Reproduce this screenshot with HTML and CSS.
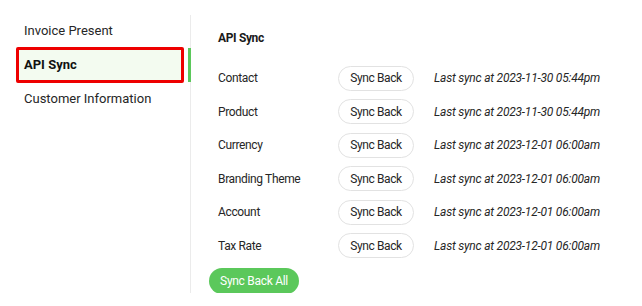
FILE: index.html
```html
<!DOCTYPE html>
<html lang="en">
<head>
    <meta charset="UTF-8">
    <title>Settings - API Sync</title>
    <link rel="stylesheet" href="styles.css">
</head>
<body>
    <div class="settings">
        <nav class="sidebar">
            <div class="nav-item">Invoice Present</div>
            <div class="nav-item active">API Sync</div>
            <div class="nav-item">Customer Information</div>
        </nav>

        <main class="panel">
            <h2 class="panel-title">API Sync</h2>
            <div class="sync-table">
                <span class="sync-label">Contact</span>
                <button class="btn-outline">Sync Back</button>
                <span class="sync-time">Last sync at 2023-11-30 05:44pm</span>

                <span class="sync-label">Product</span>
                <button class="btn-outline">Sync Back</button>
                <span class="sync-time">Last sync at 2023-11-30 05:44pm</span>

                <span class="sync-label">Currency</span>
                <button class="btn-outline">Sync Back</button>
                <span class="sync-time">Last sync at 2023-12-01 06:00am</span>

                <span class="sync-label">Branding Theme</span>
                <button class="btn-outline">Sync Back</button>
                <span class="sync-time">Last sync at 2023-12-01 06:00am</span>

                <span class="sync-label">Account</span>
                <button class="btn-outline">Sync Back</button>
                <span class="sync-time">Last sync at 2023-12-01 06:00am</span>

                <span class="sync-label">Tax Rate</span>
                <button class="btn-outline">Sync Back</button>
                <span class="sync-time">Last sync at 2023-12-01 06:00am</span>
            </div>
            <button class="btn-primary">Sync Back All</button>
        </main>
    </div>
</body>
</html>
```

FILE: styles.css
```css
:root {
    --text-color: #262626;
    --border-color: #ebebeb;
    --green: #5bc85b;
    --font-family: Roboto, 'Noto Sans', sans-serif;
}

* {
    margin: 0;
    padding: 0;
    box-sizing: border-box;
}

body {
    font-family: var(--font-family);
    background: #ffffff;
    color: var(--text-color);
}

.settings {
    display: flex;
    margin-top: 15px;
    height: 278px;
}

.sidebar {
    width: 191px;
    padding: 0 6px 0 16px;
    border-right: 1px solid var(--border-color);
    display: flex;
    flex-direction: column;
}

.nav-item {
    position: relative;
    height: 32px;
    padding: 0 5px;
    border: 3px solid transparent;
    font-size: 13px;
    line-height: 26px;
    color: var(--text-color);
}

.nav-item.active {
    height: 36px;
    line-height: 30px;
    border-color: #ee0000;
    border-radius: 2px;
    background: #f3fbf0;
    font-weight: 700;
    color: #111111;
}

.nav-item.active::after {
    content: "";
    position: absolute;
    top: -2px;
    bottom: -2px;
    right: -10px;
    width: 3px;
    background: var(--green);
}

.panel {
    flex: 1;
    padding: 15px 0 0 18px;
    letter-spacing: -0.35px;
}

.panel-title {
    margin: 0 0 19.5px 9px;
    font-size: 12px;
    line-height: 16px;
    font-weight: 700;
    color: #1a1a1a;
}

.sync-table {
    display: grid;
    grid-template-columns: 100px 76px auto;
    column-gap: 20px;
    row-gap: 8.5px;
    align-items: center;
    margin-left: 9px;
    font-size: 12px;
}

.sync-label {
    color: var(--text-color);
}

.sync-time {
    font-style: italic;
    letter-spacing: -0.22px;
    color: var(--text-color);
}

.btn-outline {
    height: 25px;
    background: #ffffff;
    border: 1px solid #e2e2e2;
    border-radius: 13px;
    font-family: var(--font-family);
    font-size: 12px;
    letter-spacing: -0.4px;
    color: var(--text-color);
    cursor: pointer;
}

.btn-primary {
    margin-top: 9.5px;
    width: 90px;
    height: 26px;
    background: var(--green);
    border: none;
    border-radius: 13px;
    font-family: var(--font-family);
    font-size: 12px;
    letter-spacing: -0.3px;
    color: #ffffff;
    cursor: pointer;
}
```
